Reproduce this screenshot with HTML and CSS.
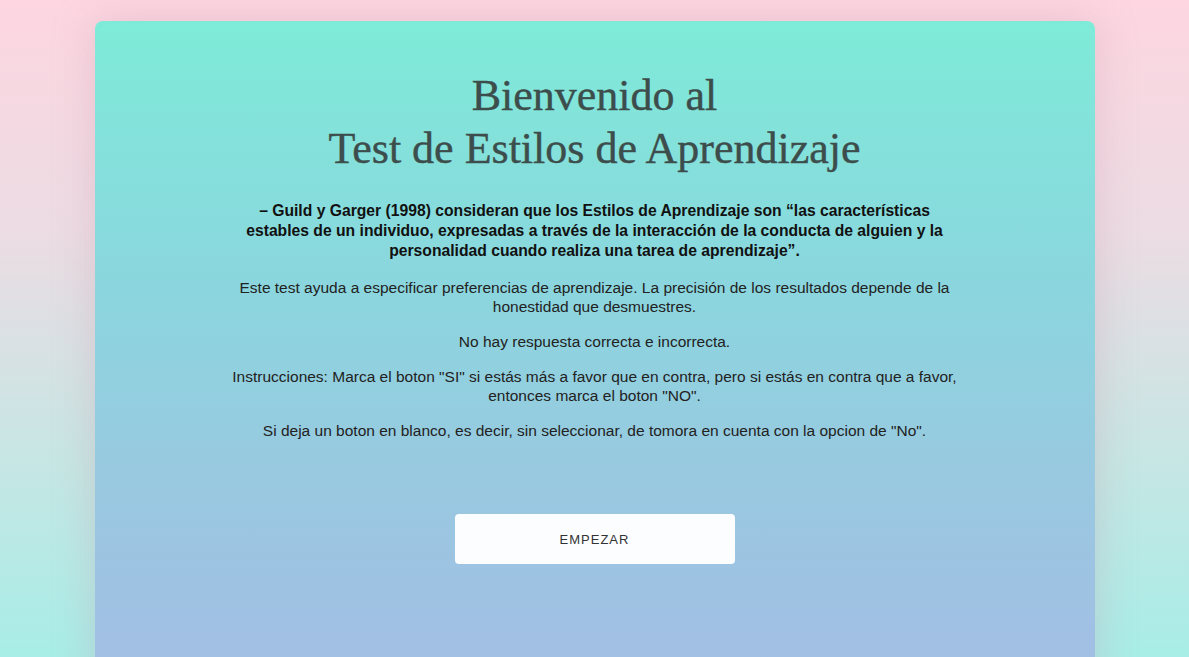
FILE: index.html
```html
<!DOCTYPE html>
<html lang="es">
<head>
<meta charset="utf-8">
<title>Test de Estilos de Aprendizaje</title>
<link rel="stylesheet" href="styles.css">
</head>
<body>
<main class="card">
  <h1 class="title">Bienvenido al<br>Test de Estilos de Aprendizaje</h1>
  <div class="content">
    <p class="quote">– Guild y Garger (1998) consideran que los Estilos de Aprendizaje son “las características estables de un individuo, expresadas a través de la interacción de la conducta de alguien y la personalidad cuando realiza una tarea de aprendizaje”.</p>
    <p class="text">Este test ayuda a especificar preferencias de aprendizaje. La precisión de los resultados depende de la honestidad que desmuestres.</p>
    <p class="text">No hay respuesta correcta e incorrecta.</p>
    <p class="text">Instrucciones: Marca el boton "SI" si estás más a favor que en contra, pero si estás en contra que a favor, entonces marca el boton "NO".</p>
    <p class="text">Si deja un boton en blanco, es decir, sin seleccionar, de tomora en cuenta con la opcion de "No".</p>
  </div>
  <div class="actions">
    <button class="start">EMPEZAR</button>
  </div>
</main>
</body>
</html>
```
FILE: styles.css
```css
html, body {
  margin: 0;
  height: 100%;
}
body {
  background: linear-gradient(180deg, #fdd6e1 0%, #ecdce3 35%, #c6e6e4 70%, #a8ede7 100%);
  font-family: "Liberation Sans", Arial, sans-serif;
  padding-top: 21px;
  box-sizing: border-box;
  overflow: hidden;
}
.card {
  width: 1000px;
  margin: 0 auto;
  min-height: 700px;
  border-radius: 8px;
  background: linear-gradient(180deg, #7eebd8 0px, #8ad7de 250px, #98c9e0 450px, #a2bfe4 636px);
  box-shadow: 0 0 40px rgba(200, 150, 170, 0.35);
  padding-top: 48px;
  box-sizing: border-box;
}
.title {
  margin: 0;
  text-align: center;
  font-family: "Liberation Serif", "DejaVu Serif", serif;
  font-weight: normal;
  font-size: 44px;
  line-height: 53px;
  color: #3c4d4b;
  -webkit-text-stroke: 0.4px #3c4d4b;
}
.content {
  width: 734px;
  margin: 26px auto 0;
  text-align: center;
}
.quote {
  margin: 0 0 17px;
  font-weight: bold;
  font-size: 15.7px;
  line-height: 20px;
  color: #111;
}
.text {
  margin: 0 0 16px;
  font-size: 15.5px;
  line-height: 19px;
  color: #222;
}
.actions {
  display: flex;
  justify-content: center;
  margin-top: 74px;
}
.start {
  width: 280px;
  height: 50px;
  border: none;
  border-radius: 4px;
  background: #fbfdff;
  font-family: "Liberation Sans", Arial, sans-serif;
  font-size: 13px;
  letter-spacing: 1px;
  color: #333;
  cursor: pointer;
}
```
